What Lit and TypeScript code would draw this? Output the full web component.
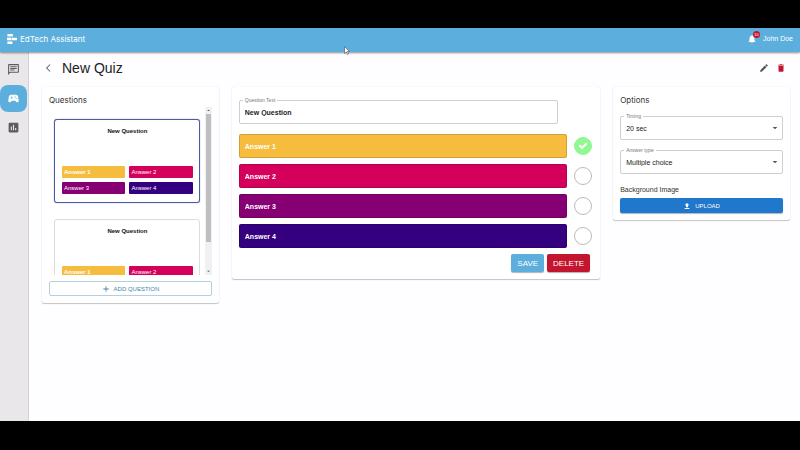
import { LitElement, html, css, svg } from "lit";
import { customElement, property, state } from "lit/decorators.js";
import { classMap } from "lit/directives/class-map.js";

const ANSWERS = ["Answer 1", "Answer 2", "Answer 3", "Answer 4"];

const icon = (body: unknown, cls = "icon", box = "0 0 24 24") =>
  html`<svg class=${cls} viewBox=${box} aria-hidden="true">${body}</svg>`;

const palette = css`
  *, *::before, *::after { box-sizing: border-box; }
  button, input, select { font: inherit; margin: 0; }
  svg { display: block; fill: currentColor; }
  .a0 { background: #f5bc3e; }
  .a1 { background: #d5005c; }
  .a2 { background: #870073; }
  .a3 { background: #350080; }
`;

@customElement("question-preview")
export class QuestionPreview extends LitElement {
  @property({ type: Boolean }) selected = false;

  static styles = [palette, css`
    :host { display: block; }
    .slide {
      border: 1px solid #dcdce0;
      border-radius: 3px;
      padding: 7px 6px 8px 7px;
      background: #fff;
    }
    .slide.selected { border: 1px solid #4c5aa5; box-shadow: 0 0 1px #4c5aa5; }
    .name { margin: 0; text-align: center; font-size: 6px; font-weight: 700; line-height: 8px; color: #111; }
    .answers { display: grid; grid-template-columns: 1fr 1fr; gap: 4px; margin-top: 31px; }
    .answer { height: 12px; padding: 0 2px; border-radius: 1px; color: #fff; font-size: 6px; line-height: 13px; }
    .answer.a0 { font-weight: 700; }
  `];

  render() {
    return html`
      <div class=${classMap({ slide: true, selected: this.selected })}>
        <p class="name">New Question</p>
        <div class="answers">
          ${ANSWERS.map((a, i) => html`<div class="answer a${i}">${a}</div>`)}
        </div>
      </div>`;
  }
}

@customElement("app-root")
export class AppRoot extends LitElement {
  @state() private correct = 0;

  static styles = [palette, css`
    :host {
      box-sizing: border-box;
      display: flex;
      flex-direction: column;
      min-height: 100vh;
      padding: 28px 0 29px;
      background: #000;
      color: #333;
      font-family: "Liberation Sans", Arial, sans-serif;
      font-size: 7px;
    }
    .topbar {
      position: relative;
      display: flex;
      align-items: center;
      height: 24px;
      padding: 0 7px 2px;
      background: #5cafdd;
      color: #fff;
      box-shadow: 0 1px 2px rgba(0, 0, 0, 0.45);
      z-index: 1;
    }
    .logo { width: 10px; height: 10px; margin-right: 3px; }
    .brand { flex: 1; font-family: Inter, sans-serif; font-size: 8px; line-height: 12px; }
    .bell { position: relative; padding: 0; border: 0; background: none; color: #fff; margin-right: 6px; }
    .bell .icon { width: 10px; height: 10px; }
    .badge {
      position: absolute; top: -3px; right: -3px;
      width: 7px; height: 7px; border-radius: 50%;
      background: #c4152f; font-size: 4px; line-height: 7px; text-align: center;
    }
    .user { line-height: 10px; }
    .pointer { position: absolute; left: 43%; top: 18px; width: 6px; height: 9px; }
    .shell { flex: 1; display: flex; background: #fefdff; }
    .rail {
      display: flex; flex-direction: column; align-items: flex-start;
      width: 29px; padding-top: 4px;
      background: #e9e7ea; border-right: 1px solid #d4d2d6;
    }
    .rail a {
      display: grid; place-items: center;
      width: 27px; height: 27px; margin-bottom: 2px;
      border-radius: 8px; color: #5c5c5f;
    }
    .rail a.active { background: #5cafdd; color: #fff; }
    .rail .icon { width: 13px; height: 13px; }
    main { flex: 1; min-width: 0; padding: 5px 10px 12px 13px; }
    .heading { display: flex; align-items: center; height: 22px; margin-bottom: 8px; padding-right: 4px; }
    h1 { flex: 1; margin: 0; font-size: 14px; line-height: 18px; font-weight: 400; color: #222; }
    h2 { margin: 0; font-size: 8px; line-height: 11px; font-weight: 400; font-family: Inter, sans-serif; }
    .tool { padding: 0; border: 0; background: none; color: #555; }
    .tool .icon { width: 10px; height: 10px; }
    .tool.back { width: 12px; margin-right: 8px; }
    .tool.back .icon { width: 12px; height: 12px; }
    .tool.edit { margin-right: 7px; }
    .tool.remove { color: #c4152f; }
    .columns { display: grid; grid-template-columns: minmax(0, 12fr) minmax(0, 25fr) minmax(0, 12fr); gap: 13px; align-items: start; }
    .card {
      background: #fff; border-radius: 2px; padding: 8px 7px 7px;
      box-shadow: 0 1px 1px rgba(0, 0, 0, 0.22), 0 0 1px rgba(0, 0, 0, 0.16);
    }
    .scroller { display: flex; height: 168px; margin: 1px 0 6px; }
    .list { flex: 1; min-width: 0; overflow: hidden; padding: 12px 5px 0; }
    .list question-preview { margin-bottom: 16px; }
    .bar { display: flex; flex-direction: column; width: 7px; background: #f1f0f2; color: #555; }
    .bar .arrow { width: 7px; height: 7px; }
    .thumb { height: 128px; margin: 0 1px; background: #bfbec1; }
    .spacer { flex: 1; }
    .btn {
      display: flex; align-items: center; justify-content: center;
      border: 0; border-radius: 2px; padding: 0; color: #fff;
      box-shadow: 0 1px 1px rgba(0, 0, 0, 0.3);
    }
    .btn .icon { width: 8px; height: 8px; margin-right: 4px; }
    .btn.wide { width: 100%; height: 15px; font-size: 6px; }
    .btn.add { border: 1px solid #b4cfe2; background: #fff; color: #4484ae; box-shadow: none; }
    .btn.upload { background: #1f78cc; }
    .editor { padding: 8px 10px 7px 7px; }
    .field { position: relative; }
    .field label {
      position: absolute; left: 4px; top: -3px; padding: 0 2px;
      background: #fff; color: #777; font-size: 5px; line-height: 6px;
    }
    .field input, .field select {
      display: block; width: 100%; height: 24px; padding: 0 5px;
      border: 1px solid #cfced2; border-radius: 2px; background: #fff;
      color: #222; appearance: none; outline: 0;
    }
    .field .caret { position: absolute; right: 4px; top: 8px; width: 8px; height: 8px; color: #555; pointer-events: none; }
    .question { margin: 5px 32px 10px 0; }
    .question input { font-weight: 700; }
    .row { display: flex; align-items: center; margin-bottom: 6px; }
    .row .answer {
      flex: 1; min-width: 0; height: 24px; padding: 0 5px;
      border: 1px solid rgba(0, 0, 0, 0.14); border-radius: 2px;
      color: #fff; font-weight: 700; outline: 0;
    }
    .tick { position: relative; width: 18px; height: 18px; margin: 0 -2px 0 7px; }
    .tick input {
      display: block; width: 18px; height: 18px; appearance: none;
      border: 1px solid #bbb; border-radius: 50%; background: #fff;
    }
    .tick input:checked { border-color: #90f890; background: #90f890; }
    .tick .icon { position: absolute; inset: 3px; width: 12px; height: 12px; color: #fff; pointer-events: none; }
    .actions { display: flex; justify-content: flex-end; gap: 3px; }
    .actions .btn { height: 18px; padding: 0 6px; font-size: 8px; }
    .btn.save { background: #5cafdd; }
    .btn.delete { background: #c4152f; }
    .options .field { margin-top: 10px; }
    .sub { margin: 11px 0 4px; line-height: 9px; }
  `];

  private select(id: string, label: string, options: string[]) {
    return html`
      <div class="field">
        <select id=${id}>${options.map((o) => html`<option>${o}</option>`)}</select>
        <label for=${id}>${label}</label>
        ${icon(svg`<path d="M5 9l7 7 7-7z"/>`, "caret")}
      </div>`;
  }

  render() {
    return html`
      <header class="topbar">
        ${icon(svg`<path d="M1 0h13v6H1zM0 9h11v6H0zM12 9h12v6H12zM1 18h12v6H1z"/>`, "logo")}
        <span class="brand">EdTech Assistant</span>
        <button class="bell" aria-label="Notifications">
          ${icon(svg`<path d="M12 22c1.100 0 2-.9 2-2h-4c0 1.100.9 2 2 2zm6-6v-5c0-3.070-1.640-5.640-4.500-6.320V4a1.500 1.500 0 0 0-3 0v.68C7.630 5.360 6 7.920 6 11v5l-2 2v1h16v-1z"/>`)}
          <span class="badge">10</span>
        </button>
        <span class="user">John Doe</span>
        ${icon(svg`<path d="M1 1v14l3.500-3 2.500 5 2-1-2-5h4z" fill="#fff" stroke="#555" stroke-width="1.300"/>`, "pointer", "0 0 12 18")}
      </header>
      <div class="shell">
        <nav class="rail">
          <a href="#chat" aria-label="Chat">${icon(svg`<path d="M4 4h16v12H5.170L4 17.170V4m0-2c-1.100 0-2 .9-2 2v18l4-4h14c1.100 0 2-.9 2-2V4c0-1.100-.9-2-2-2zm2 10h8v2H6zm0-3h12v2H6zm0-3h12v2H6z"/>`)}</a>
          <a class="active" href="#quiz" aria-label="Quizzes">${icon(svg`<path d="M21.580 16.090l-1.090-7.660A4 4 0 0 0 16.530 5H7.470a4 4 0 0 0-3.960 3.430l-1.090 7.660A2.545 2.545 0 0 0 4.940 19c.68 0 1.320-.27 1.800-.75L9 16h6l2.250 2.250c.48.48 1.130.75 1.800.75a2.545 2.545 0 0 0 2.530-2.910zM11 11H9v2H8v-2H6v-1h2V8h1v2h2zm4-1a1 1 0 1 1 0-2 1 1 0 0 1 0 2zm2 3a1 1 0 1 1 0-2 1 1 0 0 1 0 2z"/>`)}</a>
          <a href="#stats" aria-label="Statistics">${icon(svg`<path d="M19 3H5c-1.100 0-2 .9-2 2v14c0 1.100.9 2 2 2h14c1.100 0 2-.9 2-2V5c0-1.100-.9-2-2-2zM9 17H7v-7h2zm4 0h-2V7h2zm4 0h-2v-4h2z"/>`)}</a>
        </nav>
        <main>
          <div class="heading">
            <button class="tool back" aria-label="Back">${icon(svg`<path d="M15.600 4.500l1.200 1.200L10.500 12l6.300 6.300-1.200 1.200L8 12z"/>`)}</button>
            <h1>New Quiz</h1>
            <button class="tool edit" aria-label="Edit">${icon(svg`<path d="M3 17.250V21h3.750L17.810 9.940l-3.750-3.750zM20.710 7.040a1 1 0 0 0 0-1.410l-2.340-2.340a1 1 0 0 0-1.410 0l-1.830 1.830 3.750 3.750z"/>`)}</button>
            <button class="tool remove" aria-label="Delete quiz">${icon(svg`<path d="M6 19c0 1.100.9 2 2 2h8c1.100 0 2-.9 2-2V7H6zM19 4h-3.500l-1-1h-5l-1 1H5v2h14z"/>`)}</button>
          </div>
          <div class="columns">
            <section class="card">
              <h2>Questions</h2>
              <div class="scroller">
                <div class="list">
                  <question-preview selected></question-preview>
                  <question-preview></question-preview>
                </div>
                <div class="bar">
                  ${icon(svg`<path d="M7 14l5-5 5 5z"/>`, "arrow")}
                  <div class="thumb"></div>
                  <div class="spacer"></div>
                  ${icon(svg`<path d="M7 9l5 5 5-5z"/>`, "arrow")}
                </div>
              </div>
              <button class="btn wide add">${icon(svg`<path d="M20 13.200h-6.800V20h-2.400v-6.800H4v-2.400h6.800V4h2.400v6.800H20z"/>`)}ADD QUESTION</button>
            </section>
            <section class="card editor">
              <div class="field question">
                <input id="question" .value=${"New Question"} />
                <label for="question">Question Text</label>
              </div>
              ${ANSWERS.map((a, i) => html`
                <div class="row">
                  <input class="answer a${i}" aria-label="Answer text ${i + 1}" .value=${a} />
                  <div class="tick">
                    <input type="radio" name="correct" aria-label="${a} is correct"
                      .checked=${this.correct === i} @change=${() => (this.correct = i)} />
                    ${this.correct === i
                      ? icon(svg`<path d="M3 12l3-3 4 4 8-8 3 3-11 11z"/>`)
                      : ""}
                  </div>
                </div>`)}
              <div class="actions">
                <button class="btn save">SAVE</button>
                <button class="btn delete">DELETE</button>
              </div>
            </section>
            <section class="card options">
              <h2>Options</h2>
              ${this.select("timing", "Timing", ["20 sec", "30 sec", "60 sec"])}
              ${this.select("type", "Answer type", ["Multiple choice", "True or false"])}
              <p class="sub">Background Image</p>
              <button class="btn wide upload">${icon(svg`<path d="M9 16h6v-6h4l-7-7-7 7h4zm-4 2h14v3H5z"/>`)}UPLOAD</button>
            </section>
          </div>
        </main>
      </div>`;
  }
}
